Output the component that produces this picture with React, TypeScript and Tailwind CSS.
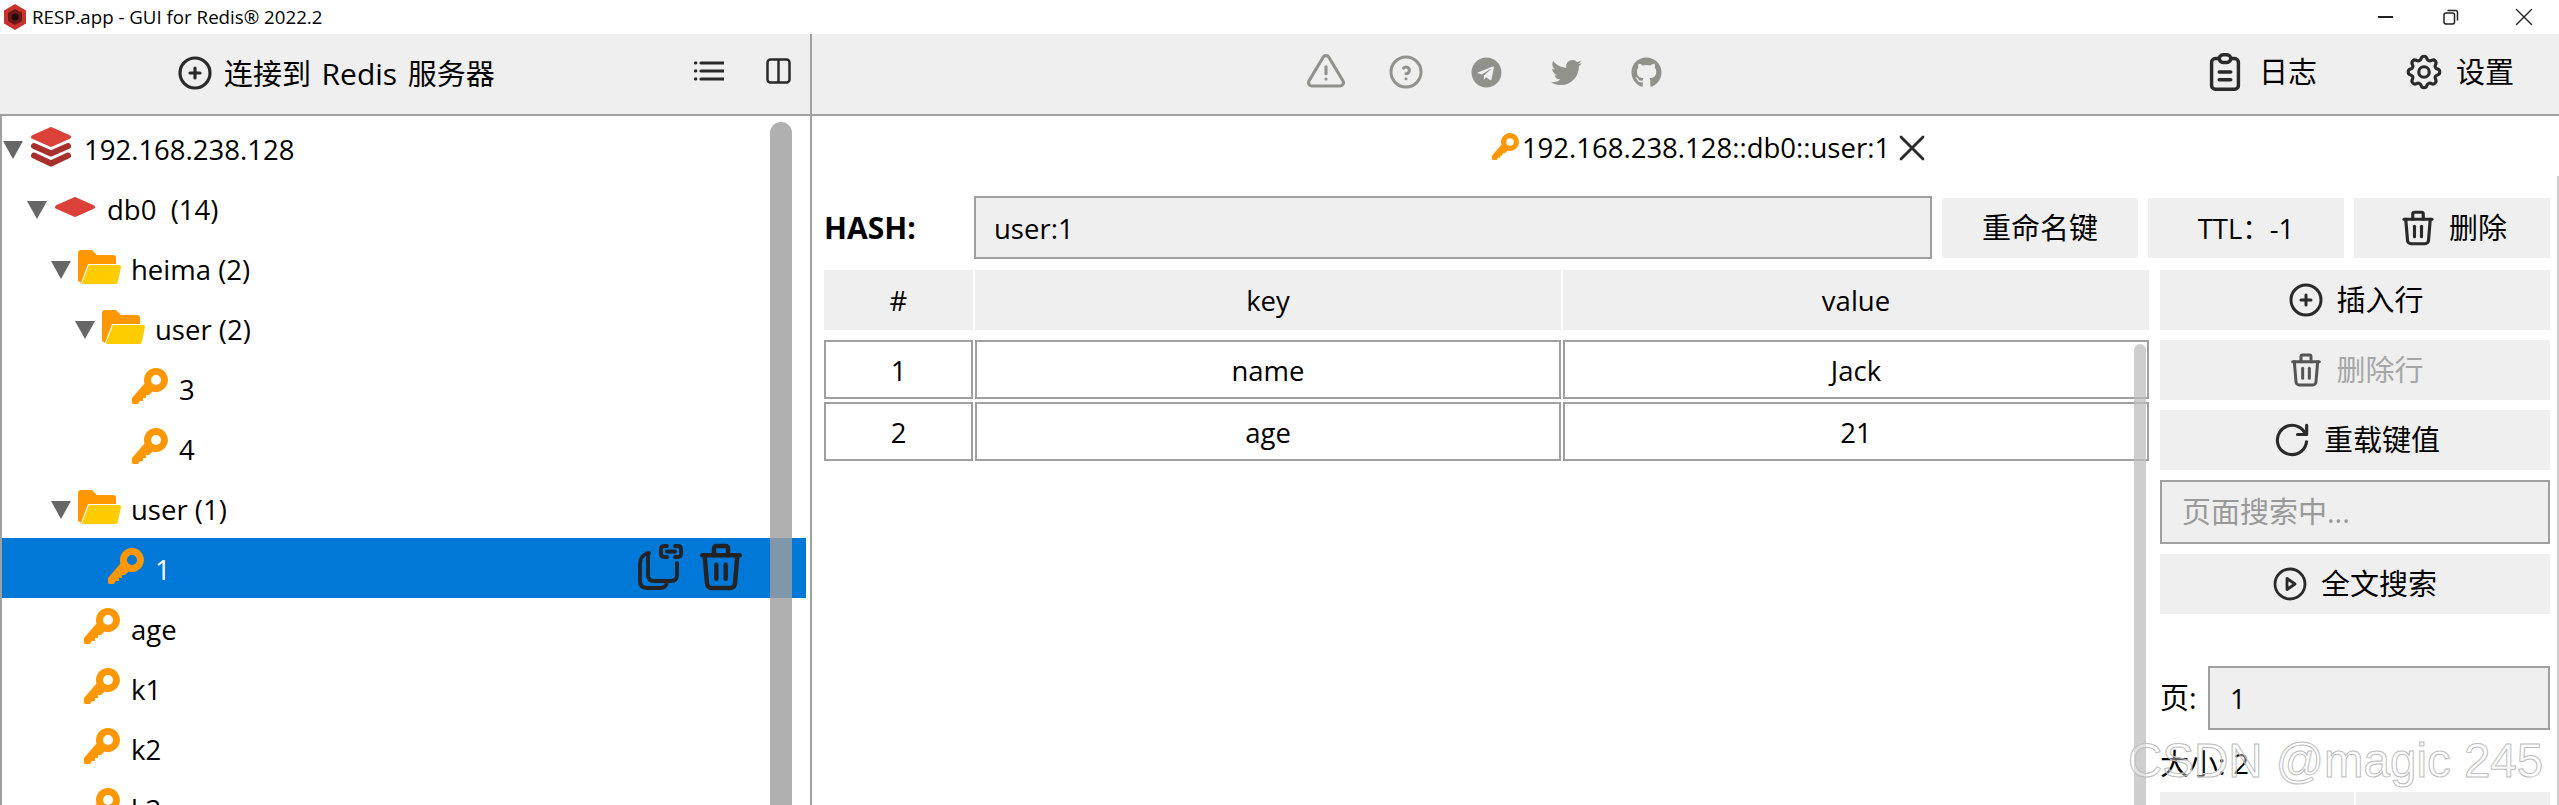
import { TbCirclePlus, TbAlertTriangle, TbHelpCircle, TbTrash, TbClipboardText, TbSettings, TbX, TbReload } from "react-icons/tb";
import { FaTelegram, FaTwitter, FaGithub } from "react-icons/fa";
import type { ReactNode } from "react";

function KeyIcon({ className }: { className?: string }) {
  return (
    <svg viewBox="0 0 36 36" className={className} fill="#ff9800">
      <path
        fillRule="evenodd"
        d="M24 0a12 12 0 1 1-3.500 23.500L17 27h-3v3h-3v3H8l-2 3H1l-1-1v-5L12.500 15.500A12 12 0 0 1 24 0zm0 7a5 5 0 1 0 0 10 5 5 0 0 0 0-10z"
      />
    </svg>
  );
}

function FolderIcon() {
  return (
    <svg viewBox="0 0 43 34" className="w-[43px] h-[34px] shrink-0">
      <path d="M3 0h11l5 5h16a3 3 0 0 1 3 3v6H10L3 33 0 31V3a3 3 0 0 1 3-3z" fill="#ff9800" />
      <path d="M11 15h30a2 2 0 0 1 2 2l-3 14a3 3 0 0 1-3 3H5a1 1 0 0 1-1-1z" fill="#ffcc00" />
    </svg>
  );
}

function Triangle() {
  return <div className="w-0 h-0 shrink-0 border-l-[10px] border-r-[10px] border-t-[18px] border-l-transparent border-r-transparent border-t-[#666666] mt-[4px]" />;
}

function ServerIcon() {
  return (
    <svg viewBox="0 0 42 40" className="w-[42px] h-[40px] shrink-0">
      <path d="M21 2 39 10 21 18 3 10z" fill="#dc4139" stroke="#dc4139" strokeWidth="4" strokeLinejoin="round" />
      <path d="M4 19 21 26.500 38 19" fill="none" stroke="#a92f2c" strokeWidth="6" strokeLinecap="round" strokeLinejoin="round" />
      <path d="M4 28.500 21 36.500 38 28.500" fill="none" stroke="#a92f2c" strokeWidth="6" strokeLinecap="round" strokeLinejoin="round" />
    </svg>
  );
}

function DbIcon() {
  return (
    <svg viewBox="0 0 42 20" className="w-[42px] h-[20px] shrink-0 mb-[2px]">
      <path d="M21 2 39 10 21 18 3 10z" fill="#dc4139" stroke="#dc4139" strokeWidth="4" strokeLinejoin="round" />
    </svg>
  );
}

function CopyLinkIcon() {
  return (
    <svg viewBox="0 0 46 46" className="w-[46px] h-[46px]" fill="none" stroke="#232323" strokeWidth="3.800" strokeLinecap="round" strokeLinejoin="round">
      <path d="M11 9C5 10 2 14 2 20v17c0 5 3 7 7 7h13c4 0 7-2 7-6" />
      <path d="M10 9v22c0 4 2 6 6 6h17c4 0 6-2 6-6V19" />
      <path d="M29 2h-3c-2 0-3 1.500-3 3.500v4c0 2 1 3.500 3 3.500h3" />
      <path d="M37 2h3c2 0 3 1.500 3 3.500v4c0 2-1 3.500-3 3.500h-3" />
      <path d="M29 7.500h8" />
    </svg>
  );
}

function Row({ level, kind, label, selected }: { level: number; kind: "server" | "db" | "folder" | "key"; label: string; selected?: boolean }) {
  const pad = level === 0 ? "pl-[1px]" : level === 1 ? "pl-[25px]" : level === 2 ? "pl-[49px]" : level === 3 ? "pl-[73px]" : "pl-[97px]";
  return (
    <div className={`h-[60px] shrink-0 flex items-center ${pad} ${selected ? "bg-[#0078d7] text-white" : "text-black"}`}>
      {kind === "key" ? <div className="w-[33px] shrink-0" /> : <Triangle />}
      {kind === "server" && <div className="ml-[7px] mr-[12px] flex mb-[3px]"><ServerIcon /></div>}
      {kind === "db" && <div className="ml-[7px] mr-[11px] flex"><DbIcon /></div>}
      {kind === "folder" && <div className="ml-[7px] mr-[10px] flex mb-[2px]"><FolderIcon /></div>}
      {kind === "key" && <div className="mr-[11px] flex mb-[4px]"><KeyIcon className="w-[36px] h-[36px]" /></div>}
      <span className="whitespace-pre leading-none mt-[3px]">{label}</span>
      {selected && (
        <div className="ml-auto mr-[57px] flex items-center gap-[9px] text-[#232323] mb-[2px]">
          <CopyLinkIcon />
          <TbTrash size={56} strokeWidth={1.900} />
        </div>
      )}
    </div>
  );
}

function GrayButton({ children, disabled }: { children: ReactNode; disabled?: boolean }) {
  return (
    <div className={`h-[60px] w-full bg-[#efefef] flex items-center justify-center gap-[10px] text-[29px] ${disabled ? "text-[#a6a6a6]" : "text-black"}`}>
      {children}
    </div>
  );
}

function Cell({ className, children }: { className: string; children: ReactNode }) {
  return <div className={`flex items-center justify-center pt-[2px] ${className}`}>{children}</div>;
}

export default function App() {
  return (
    <div className="relative h-[805px] w-[2559px] overflow-hidden bg-white text-[27.500px] font-['Open_Sans','Noto_Sans_CJK_SC',sans-serif] text-black">
      {/* title bar */}
      <div className="h-[34px] flex items-center pl-[3px] text-[18.700px]">
        <svg viewBox="0 0 24 26" className="w-[24px] h-[26px] mr-[5px]">
          <path d="M12 0 23 6.500v13L12 26 1 19.500v-13z" fill="#c8322d" />
          <path d="M12 5 19 9v8l-7 4-7-4V9z" fill="#6b1a18" />
          <circle cx="12" cy="13" r="3.500" fill="#260808" />
        </svg>
        <span>RESP.app - GUI for Redis® 2022.2</span>
        <div className="ml-auto flex items-center mr-[20px] gap-[50px]">
          <div className="w-[15px] h-[2px] bg-[#222222]" />
          <svg viewBox="0 0 16 16" className="w-[16px] h-[16px]" fill="none" stroke="#222222" strokeWidth="1.500">
            <rect x="1" y="4" width="10.500" height="11" rx="2" />
            <path d="M4.500 1.500h8a2 2 0 0 1 2 2v8" />
          </svg>
          <TbX size={30} strokeWidth={1.100} color="#222222" />
        </div>
      </div>

      {/* toolbar */}
      <div className="h-[82px] flex bg-[#efefef] border-b-2 border-[#a0a0a0] text-black">
        <div className="w-[812px] shrink-0 border-r-2 border-[#a0a0a0] flex items-center pb-[2px]">
          <div className="flex items-center ml-[175px] gap-[9px]">
            <TbCirclePlus size={40} strokeWidth={1.900} color="#2a2a2a" />
            <span className="text-[29px] [word-spacing:3px]">连接到 <span className="text-[30px]">Redis</span> 服务器</span>
          </div>
          <div className="ml-auto mr-[19px] flex items-center gap-[42px] mb-[4px]">
            <svg viewBox="0 0 30 20" className="w-[30px] h-[20px]" fill="none" stroke="#2a2a2a">
              <path d="M7 2h23M7 10h23M7 18h23" strokeWidth="3.200" strokeLinecap="round" />
              <path d="M1 2h1M1 10h1M1 18h1" strokeWidth="2.800" strokeLinecap="round" />
            </svg>
            <svg viewBox="0 0 25 26" className="w-[25px] h-[26px]" fill="none" stroke="#2a2a2a" strokeWidth="2.500">
              <rect x="1.500" y="1.500" width="22" height="23" rx="3" />
              <path d="M12.500 1.500v23" />
            </svg>
          </div>
        </div>
        <div className="flex-1 flex items-center pb-[4px]">
          <div className="flex items-center ml-[474px] text-[#92928c]">
            <div className="w-[80px] flex justify-center"><TbAlertTriangle size={42} strokeWidth={1.800} /></div>
            <div className="w-[80px] flex justify-center"><TbHelpCircle size={40} strokeWidth={1.800} /></div>
            <div className="w-[80px] flex justify-center"><FaTelegram size={31} /></div>
            <div className="w-[80px] flex justify-center"><FaTwitter size={31} /></div>
            <div className="w-[80px] flex justify-center"><FaGithub size={31} /></div>
          </div>
          <div className="ml-auto flex items-center mr-[45px] text-[29px]">
            <TbClipboardText size={46} strokeWidth={1.800} color="#2a2a2a" />
            <span className="ml-[11px]">日志</span>
            <TbSettings size={42} strokeWidth={1.800} color="#2a2a2a" className="ml-[86px]" />
            <span className="ml-[11px]">设置</span>
          </div>
        </div>
      </div>

      {/* body */}
      <div className="flex h-[689px]">
        <div className="relative w-[810px] shrink-0 border-l-2 border-[#a0a0a0] border-r-[4px] border-r-white overflow-hidden flex flex-col pt-[2px]">
          <Row level={0} kind="server" label="192.168.238.128" />
          <Row level={1} kind="db" label="db0  (14)" />
          <Row level={2} kind="folder" label="heima (2)" />
          <Row level={3} kind="folder" label="user (2)" />
          <Row level={4} kind="key" label="3" />
          <Row level={4} kind="key" label="4" />
          <Row level={2} kind="folder" label="user (1)" />
          <Row level={3} kind="key" label="1" selected />
          <Row level={2} kind="key" label="age" />
          <Row level={2} kind="key" label="k1" />
          <Row level={2} kind="key" label="k2" />
          <Row level={2} kind="key" label="k3" />
          <div className="absolute left-[768px] top-[6px] bottom-0 w-[22px] rounded-t-full bg-[rgba(158,158,158,0.81)]" />
        </div>
        <div className="w-[2px] shrink-0 bg-[#a0a0a0]" />

        <div className="relative flex-1 min-w-0 pl-[12px] pr-[9px]">
          <div className="h-[80px] flex items-center justify-center pl-[52px] pb-[16px]">
            <KeyIcon className="w-[27px] h-[27px] mr-[3px] mb-[4px]" />
            <span>192.168.238.128::db0::user:1</span>
            <TbX size={44} strokeWidth={1.500} color="#2a2a2a" />
          </div>
          <div className="flex items-center h-[63px] gap-[10px]">
            <div className="w-[140px] shrink-0 font-bold text-[30px]">HASH:</div>
            <div className="flex-1 h-full border-2 border-[#a0a0a0] bg-[#efefef] flex items-center pl-[18px] pt-[2px]">user:1</div>
            <div className="w-[196px] h-[60px] bg-[#efefef] flex items-center justify-center text-[29px]">重命名键</div>
            <div className="w-[196px] h-[60px] bg-[#efefef] flex items-center justify-center pt-[2px]">TTL：-1</div>
            <div className="w-[196px] h-[60px] bg-[#efefef] flex items-center justify-center gap-[10px] text-[29px]"><TbTrash size={42} strokeWidth={1.800} color="#2a2a2a" />删除</div>
          </div>

          <div className="flex mt-[11px] gap-[10px]">
            <div className="relative flex-1 min-w-0">
              <div className="grid grid-cols-[149px_586px_586px] gap-x-[2px] h-[60px] bg-white">
                <Cell className="bg-[#efefef]">#</Cell>
                <Cell className="bg-[#efefef]">key</Cell>
                <Cell className="bg-[#efefef]">value</Cell>
              </div>
              <div className="grid grid-cols-[149px_586px_586px] gap-x-[2px] gap-y-[3px] mt-[10px] auto-rows-[59px]">
                <Cell className="border-2 border-[#a0a0a0]">1</Cell>
                <Cell className="border-2 border-[#a0a0a0]">name</Cell>
                <Cell className="border-2 border-[#a0a0a0]">Jack</Cell>
                <Cell className="border-2 border-[#a0a0a0]">2</Cell>
                <Cell className="border-2 border-[#a0a0a0]">age</Cell>
                <Cell className="border-2 border-[#a0a0a0]">21</Cell>
              </div>
              <div className="absolute right-[4px] top-[74px] h-[500px] w-[12px] rounded-t-full bg-[rgba(190,190,190,0.75)]" />
            </div>
            <div className="w-[390px] shrink-0 flex flex-col gap-[10px]">
              <GrayButton><TbCirclePlus size={40} strokeWidth={1.800} color="#2a2a2a" />插入行</GrayButton>
              <GrayButton disabled><TbTrash size={40} strokeWidth={1.800} color="#555555" />删除行</GrayButton>
              <GrayButton><TbReload size={44} strokeWidth={1.700} color="#2a2a2a" />重载键值</GrayButton>
              <div className="h-[64px] border-2 border-[#a0a0a0] bg-[#efefef] flex items-center pl-[20px] text-[29px] text-[#999999]">页面搜索中...</div>
              <GrayButton><svg viewBox="0 0 34 34" className="w-[34px] h-[34px] mr-[4px]" fill="none" stroke="#2a2a2a" strokeWidth="2.800" strokeLinejoin="round"><circle cx="17" cy="17" r="15" /><path d="M14 11.500l8 5.500-8 5.500z" /></svg>全文搜索</GrayButton>
              <div className="flex items-center gap-[12px] mt-[42px] h-[64px]">
                <span className="w-[36px] text-[29px]">页:</span>
                <div className="flex-1 h-full border-2 border-[#a0a0a0] bg-[#efefef] flex items-center pl-[20px] pt-[2px]">1</div>
              </div>
              <div className="h-[36px] flex items-center mt-[6px] text-[29px] whitespace-pre">大小: <span className="text-[27.500px]">2</span></div>
              <div className="grid grid-cols-2 gap-[2px]">
                <div className="h-[60px] bg-[#efefef]" />
                <div className="h-[60px] bg-[#efefef]" />
              </div>
            </div>
          </div>
          <div className="absolute right-0 top-[60px] bottom-0 w-[2px] bg-[#cccccc]" />
        </div>
      </div>

      {/* watermark */}
      <div className="absolute left-[2128px] top-[737px] text-[47.500px] leading-none font-['Liberation_Sans',sans-serif] text-white/40 [-webkit-text-stroke:1px_#bdbdbd] whitespace-nowrap">CSDN @magic 245</div>
    </div>
  );
}
